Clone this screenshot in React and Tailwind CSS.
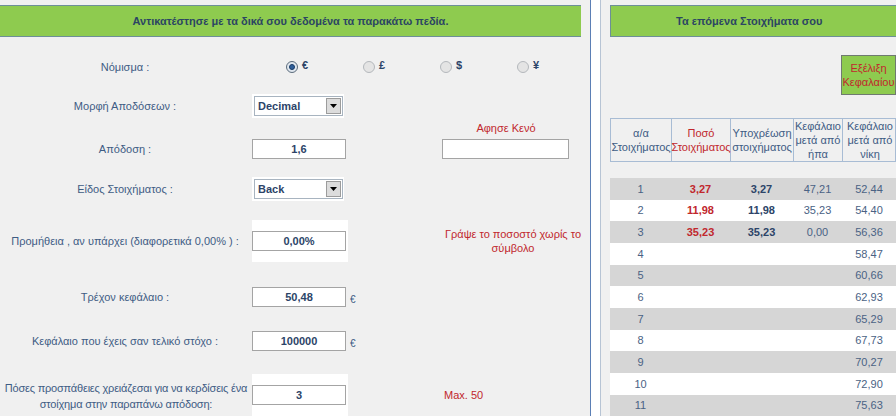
import React from 'react'

const font = { fontFamily: '"Liberation Sans", Arial, sans-serif' }

const rows = [
  { n: 1, a: '3,27', b: '3,27', c: '47,21', d: '52,44', h: 'h-[22px]' },
  { n: 2, a: '11,98', b: '11,98', c: '35,23', d: '54,40', h: 'h-[21px]' },
  { n: 3, a: '35,23', b: '35,23', c: '0,00', d: '56,36', h: 'h-[22px]' },
  { n: 4, d: '58,47', h: 'h-[22px]' },
  { n: 5, d: '60,66', h: 'h-[21px]' },
  { n: 6, d: '62,93', h: 'h-[22px]' },
  { n: 7, d: '65,29', h: 'h-[22px]' },
  { n: 8, d: '67,73', h: 'h-[21px]' },
  { n: 9, d: '70,27', h: 'h-[22px]' },
  { n: 10, d: '72,90', h: 'h-[22px]' },
  { n: 11, d: '75,63', h: 'h-[21px]' },
]

function Radio({ checked, sign }) {
  return (
    <div className="w-[77px] flex items-center gap-[4px]">
      <span
        className={`w-[12px] h-[12px] rounded-full border flex items-center justify-center ${
          checked ? 'border-[#5c6c7c] bg-[#dfe6ee]' : 'border-[#b4b8bc] bg-[#e4e4e4]'
        }`}
      >
        {checked && <span className="w-[6px] h-[6px] rounded-full bg-[#2f5f9a] border border-[#183a66]" />}
      </span>
      <span className="text-[11px] font-bold text-[#2c4468] -mt-[3px]">{sign}</span>
    </div>
  )
}

function Input({ value, className = 'w-[94px]' }) {
  return (
    <div
      className={`h-[20px] bg-white border border-[#a4a4a4] flex items-center justify-center text-[11px] font-bold text-[#2c4468] ${className}`}
    >
      {value}
    </div>
  )
}

function Select({ value }) {
  return (
    <div className="w-[92px] h-[24px] bg-white flex items-center pl-[2px]">
      <div className="w-[89px] h-[20px] border border-[#a8b4c0] bg-white flex items-center justify-between">
        <span className="pl-[3px] text-[11px] font-bold text-[#2c4468]">{value}</span>
        <span className="w-[15px] h-[16px] mr-[1px] bg-[#dcdcdc] border border-[#9c9c9c] flex items-center justify-center">
          <svg width="7" height="4" viewBox="0 0 7 4">
            <path d="M0 0h7L3.5 4z" fill="#000" />
          </svg>
        </span>
      </div>
    </div>
  )
}

function Label({ children }) {
  return <div className="text-center text-[11px] leading-[17px] text-[#3e5c84] pr-[2px]">{children}</div>
}

function Euro() {
  return <span className="pl-[2px] pt-[4px] text-[10px] text-[#3e5c84]">€</span>
}

export default function App() {
  return (
    <div className="w-[896px] h-[416px] overflow-hidden flex bg-white" style={font}>
      {/* left panel */}
      <div className="w-[591px] shrink-0 border-r border-[#5b7fb5] bg-[#f0f0f0] flex flex-col">
        <div className="mt-[5px] w-[581px] h-[32px] bg-[#8ecb4f] border-y border-[#6d8f98] flex items-center justify-center text-[11px] font-bold text-[#2b4563]">
          Αντικατέστησε με τα δικά σου δεδομένα τα παρακάτω πεδία.
        </div>

        <div className="mt-[20px] h-[20px] grid grid-cols-[252px_34px_1fr] items-center">
          <Label>Νόμισμα :</Label>
          <div />
          <div className="flex items-center">
            <Radio checked sign="€" />
            <Radio sign="£" />
            <Radio sign="$" />
            <Radio sign="¥" />
          </div>
        </div>

        <div className="mt-[16px] h-[26px] grid grid-cols-[252px_96px_1fr] items-center">
          <Label>Μορφή Αποδόσεων :</Label>
          <Select value="Decimal" />
          <div />
        </div>

        <div className="mt-[1px] h-[14px] grid grid-cols-[252px_96px_1fr] items-center">
          <div />
          <div />
          <div className="pl-[94px] w-[222px] text-center text-[11px] text-[#c1272d]">Αφησε Κενό</div>
        </div>

        <div className="mt-[4px] h-[22px] grid grid-cols-[252px_96px_1fr] items-center">
          <Label>Απόδοση :</Label>
          <Input value="1,6" />
          <div className="pl-[94px]">
            <Input value="" className="w-[127px]" />
          </div>
        </div>

        <div className="mt-[16px] h-[26px] grid grid-cols-[252px_96px_1fr] items-center">
          <Label>Είδος Στοιχήματος :</Label>
          <Select value="Back" />
          <div />
        </div>

        <div className="mt-[18px] h-[42px] grid grid-cols-[252px_96px_1fr] items-center">
          <Label>Προμήθεια , αν υπάρχει (διαφορετικά 0,00% ) :</Label>
          <div className="h-[42px] bg-white flex items-center">
            <Input value="0,00%" />
          </div>
          <div className="pl-[96px] w-[234px] text-center text-[11px] leading-[14px] text-[#c1272d]">
            Γράψε το ποσοστό χωρίς το σύμβολο
          </div>
        </div>

        <div className="mt-[24px] h-[22px] grid grid-cols-[252px_96px_1fr] items-center">
          <Label>Τρέχον κεφάλαιο :</Label>
          <Input value="50,48" />
          <Euro />
        </div>

        <div className="mt-[22px] h-[22px] grid grid-cols-[252px_96px_1fr] items-center">
          <Label>Κεφάλαιο που έχεις σαν τελικό στόχο :</Label>
          <Input value="100000" />
          <Euro />
        </div>

        <div className="mt-[22px] h-[42px] grid grid-cols-[252px_96px_1fr] items-center">
          <div className="text-center whitespace-nowrap tracking-[-0.2px] text-[11px] leading-[16px] pt-[2px] text-[#3e5c84]">
            Πόσες προσπάθειες χρειάζεσαι για να κερδίσεις ένα
            <br />
            στοίχημα στην παραπάνω απόδοση:
          </div>
          <div className="h-[42px] bg-white flex items-center">
            <Input value="3" />
          </div>
          <div className="pl-[96px] text-[11px] text-[#c1272d]">Max. 50</div>
        </div>
      </div>

      {/* gutter */}
      <div className="w-[9px] shrink-0 bg-white" />

      {/* right panel */}
      <div className="flex-1 border-l border-[#b7c4d4] bg-[#f0f0f0] pl-[9px] flex flex-col overflow-hidden">
        <div className="mt-[5px] w-[300px] h-[32px] bg-[#8ecb4f] border-y border-l border-[#6d8f98] flex items-center pl-[65px] text-[11px] font-bold text-[#2b4563]">
          Τα επόμενα Στοιχήματα σου
        </div>

        <div className="mt-[18px] self-end w-[55px] h-[40px] bg-[#8ecb4f] border border-[#6f7a70] flex items-center justify-center text-center text-[11px] leading-[14px] text-[#c1272d]">
          Εξέλιξη
          <br />
          Κεφαλαίου
        </div>

        <div className="mt-[23px] w-[286px] h-[44px] grid grid-cols-[61px_59px_63px_49px_54px] border border-[#a8bcd4] text-[11px] leading-[14px] text-center text-[#3e5c84]">
          <div className="flex items-center justify-center border-r border-[#a8bcd4]">
            α/α
            <br />
            Στοιχήματος
          </div>
          <div className="flex items-center justify-center border-r border-[#a8bcd4] text-[#c1272d]">
            Ποσό
            <br />
            Στοιχήματος
          </div>
          <div className="flex items-center justify-center border-r border-[#a8bcd4]">
            Υποχρέωση
            <br />
            στοιχήματος
          </div>
          <div className="flex items-center justify-center border-r border-[#a8bcd4]">
            Κεφάλαιο
            <br />
            μετά από
            <br />
            ήπα
          </div>
          <div className="flex items-center justify-center">
            Κεφάλαιο
            <br />
            μετά από
            <br />
            νίκη
          </div>
        </div>

        <div className="mt-[16px] w-[286px] flex flex-col">
          {rows.map((r, i) => (
            <div
              key={r.n}
              className={`${r.h} grid grid-cols-[61px_59px_63px_49px_54px] items-center text-center text-[11px] ${
                i % 2 === 0 ? 'bg-[#d6d6d6]' : 'bg-white'
              }`}
            >
              <span className="text-[#4a6284]">{r.n}</span>
              <span className="font-bold text-[#c1272d]">{r.a}</span>
              <span className="font-bold text-[#2c4468]">{r.b}</span>
              <span className="text-[#4a6284]">{r.c}</span>
              <span className="text-[#4a6284]">{r.d}</span>
            </div>
          ))}
        </div>
      </div>
    </div>
  )
}
